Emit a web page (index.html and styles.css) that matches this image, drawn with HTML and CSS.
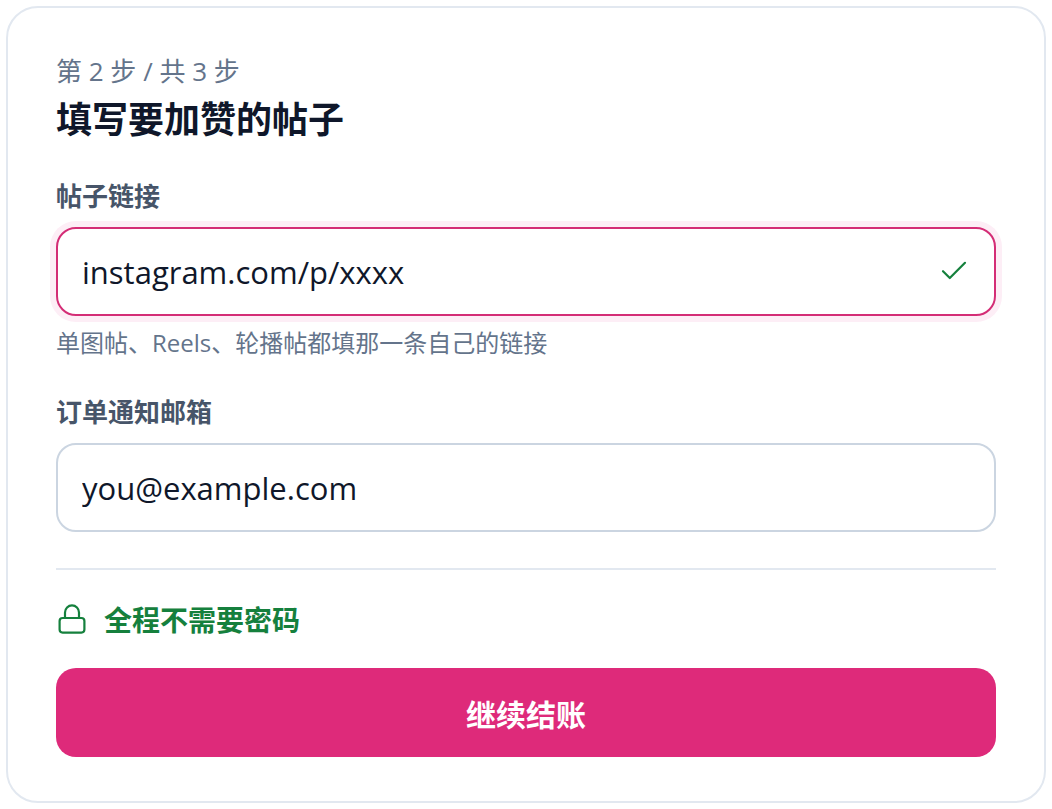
FILE: index.html
```html
<!DOCTYPE html>
<html lang="zh-CN">
<head>
<meta charset="utf-8">
<meta name="viewport" content="width=device-width, initial-scale=1">
<title>填写要加赞的帖子</title>
<link rel="stylesheet" href="styles.css">
</head>
<body>
<main class="card">
  <form class="form">
    <header class="head">
      <p class="step">第 2 步 / 共 3 步</p>
      <h1 class="title">填写要加赞的帖子</h1>
    </header>
    <div class="field">
      <label class="label" for="link">帖子链接</label>
      <div class="control control-active">
        <input class="input" id="link" type="text" value="instagram.com/p/xxxx" aria-describedby="link-hint">
        <svg class="check" viewBox="0 0 28 28" aria-hidden="true"><path d="M3 13.2 9.8 20 25 4.8"/></svg>
      </div>
      <p class="hint" id="link-hint">单图帖、Reels、轮播帖都填那一条自己的链接</p>
    </div>
    <div class="field">
      <label class="label" for="email">订单通知邮箱</label>
      <div class="control">
        <input class="input" id="email" type="email" value="you@example.com">
      </div>
    </div>
    <footer class="foot">
      <p class="secure">
        <svg class="lock" viewBox="0 0 32 32" aria-hidden="true"><rect x="3.6" y="14" width="24.8" height="14.6" rx="3"/><path d="M9 14V8.4a7 7 0 0 1 14 0V14"/></svg>
        <span>全程不需要密码</span>
      </p>
      <button class="submit" type="button">继续结账</button>
    </footer>
  </form>
</main>
</body>
</html>
```

FILE: styles.css
```css
* {
  box-sizing: border-box;
}

body {
  margin: 6px;
  background: #fff;
  color: #0f172a;
  font-family: "Open Sans", "Noto Sans CJK SC", sans-serif;
}

.card {
  padding: 44px 48px;
  border: 2px solid #e2e8f0;
  border-radius: 32px;
  background: #fff;
}

.form {
  display: flex;
  flex-direction: column;
  gap: 33px;
}

.step,
.title,
.hint,
.secure {
  margin: 0;
}

.step {
  margin-bottom: 4px;
  color: #64748b;
  font-size: 26px;
  line-height: 38px;
}

.title {
  font-size: 36px;
  font-weight: 700;
  line-height: 51px;
}

.field {
  display: flex;
  flex-direction: column;
}

.label {
  margin-bottom: 13px;
  color: #475569;
  font-size: 26px;
  font-weight: 700;
  line-height: 36px;
}

.control {
  display: flex;
  align-items: center;
  height: 89px;
  padding: 0 26px 0 24px;
  border: 2px solid #cbd5e1;
  border-radius: 20px;
  background: #fff;
}

.control-active {
  border-color: #d42d76;
  box-shadow: 0 0 0 6px #fdeef6;
}

.input {
  flex: 1;
  min-width: 0;
  padding: 0;
  border: 0;
  outline: 0;
  background: transparent;
  color: inherit;
  font: inherit;
  font-size: 31px;
  line-height: 44px;
}

.check {
  width: 28px;
  height: 28px;
  fill: none;
  stroke: #15803d;
  stroke-width: 2.2;
  stroke-linecap: round;
  stroke-linejoin: round;
}

.hint {
  margin-top: 9px;
  color: #64748b;
  font-size: 24px;
  line-height: 36px;
}

.foot {
  display: flex;
  flex-direction: column;
  gap: 28px;
  margin-top: 3px;
  padding-top: 30px;
  border-top: 2px solid #e2e8f0;
}

.secure {
  display: flex;
  align-items: center;
  gap: 16px;
  color: #15803d;
  font-size: 28px;
  font-weight: 700;
  line-height: 40px;
}

.lock {
  width: 32px;
  height: 32px;
  fill: none;
  stroke: currentColor;
  stroke-width: 2.2;
  stroke-linejoin: round;
}

.submit {
  height: 89px;
  padding: 0;
  border: 0;
  border-radius: 20px;
  background: #de2a7a;
  color: #fff;
  font: inherit;
  font-size: 30px;
  font-weight: 700;
  cursor: pointer;
}
```
